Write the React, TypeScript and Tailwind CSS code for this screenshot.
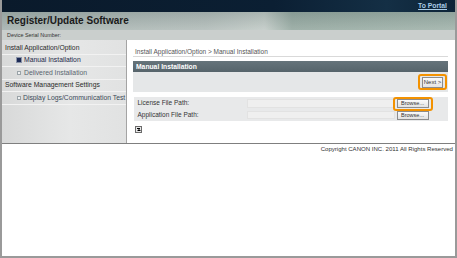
import React from "react";

const font = { fontFamily: '"Liberation Sans", Arial, sans-serif' };

function Bullet({ active }: { active?: boolean }) {
  return active ? (
    <span className="inline-block shrink-0 w-[4px] h-[4px] bg-[#1c2a55] outline outline-1 outline-[#8a93a8]" />
  ) : (
    <span className="inline-block shrink-0 w-[4px] h-[4px] border border-[#9aa3a8] bg-[#eef0f1]" />
  );
}

export default function App() {
  return (
    <div
      style={font}
      className="w-[457px] h-[258px] bg-white border-l-2 border-r-2 border-b-2 border-[#9a9a9a] flex flex-col overflow-hidden"
    >
      {/* top dark bar */}
      <div className="h-[12px] shrink-0 bg-[linear-gradient(90deg,#0a1a2b_0%,#0b1f33_60%,#142f45_85%,#0d2438_100%)] flex items-center justify-end pr-[8px]">
        <span className="text-[6.8px] font-bold text-[#a9cbe6] underline leading-[8px]">To Portal</span>
      </div>
      {/* title band */}
      <div className="h-[18px] shrink-0 relative overflow-hidden bg-[linear-gradient(90deg,#a8b4b1_0%,#b4bebb_45%,#c3ccc8_58%,#98aba3_64%,#a3b5ad_100%)] flex items-center pl-[5px]">
        <div className="absolute inset-0 bg-[linear-gradient(180deg,rgba(60,80,80,0.18)_0%,rgba(255,255,255,0.08)_100%)]" />
        <span className="relative text-[10px] font-bold text-[#1a1a1a] leading-[12px]">Register/Update Software</span>
      </div>
      {/* serial row */}
      <div className="h-[10px] shrink-0 bg-[#cacfcd] flex items-center pl-[5px]">
        <span className="text-[5.4px] text-[#333] leading-[6px]">Device Serial Number:</span>
      </div>
      {/* main */}
      <div className="h-[104px] shrink-0 flex border-b border-[#7f7f7f]">
        {/* sidebar */}
        <div className="w-[125px] shrink-0 border-r border-[#a4a4a4] bg-[linear-gradient(90deg,#d8d9d9_0%,#e6e7e7_55%,#e1e2e2_100%)] pt-[2px] text-[6.8px] leading-[8px] whitespace-nowrap">
          <div className="h-[12.5px] flex items-center pl-[3px] text-[#2a2a2a] border-b border-[#f2f2f2]">
            Install Application/Option
          </div>
          <div className="h-[12.5px] flex items-center pl-[15px] gap-[3px] text-[#1e2a4a] border-b border-[#f2f2f2]">
            <Bullet active />
            <span>Manual Installation</span>
          </div>
          <div className="h-[12.5px] flex items-center pl-[15px] gap-[3px] text-[#5a6670] border-b border-[#f2f2f2]">
            <Bullet />
            <span>Delivered Installation</span>
          </div>
          <div className="h-[12.5px] flex items-center pl-[3px] text-[#2a2a2a] border-b border-[#f2f2f2]">
            Software Management Settings
          </div>
          <div className="h-[12.5px] flex items-center pl-[15px] gap-[2px] text-[#3c4a58] border-b border-[#f2f2f2]">
            <Bullet />
            <span>Display Logs/Communication Test</span>
          </div>
        </div>
        {/* content */}
        <div className="flex-1 pl-[6px] pr-[7px] flex flex-col">
          <div className="mt-[8px] h-[8px] leading-[8px] text-[6.5px] text-[#555] pl-[2px] border-b border-[#d9d9d9] box-content">
            Install Application/Option &gt; Manual Installation
          </div>
          <div className="mt-[4px] h-[11px] bg-[linear-gradient(180deg,#66747b_0%,#56646b_100%)] flex items-center pl-[3px]">
            <span className="text-[6.75px] font-bold text-white leading-[8px]">Manual Installation</span>
          </div>
          <div className="h-[20px] bg-[#e5e7e8] flex items-center justify-end pr-[5px]">
            <span className="relative">
              <span className="absolute -left-[4px] -right-[4px] -top-[3px] -bottom-[2px] border-2 border-[#f39200] rounded-[3px]" />
              <span className="block w-[21px] h-[11px] border border-[#8c8c8c] bg-[linear-gradient(180deg,#fafafa,#e4e4e4)] text-[6px] leading-[9px] text-[#333] text-center">
                Next &gt;
              </span>
            </span>
          </div>
          <div className="mt-[5px] ml-[1px] h-[24px] bg-[#e8e9ea] flex flex-col text-[6.5px] leading-[8px] text-[#333]">
            <div className="h-[12px] flex items-center pl-[3.5px]">
              <span className="w-[109px] shrink-0">License File Path:</span>
              <span className="w-[148px] h-[9px] bg-[#efefef] border border-[#e2e2e2]" />
              <span className="relative ml-[2px]">
                <span className="absolute -left-[4px] -right-[4px] -top-[2px] -bottom-[3px] border-2 border-[#f39200] rounded-[3px]" />
                <span className="block w-[32px] h-[9px] border border-[#8c8c8c] bg-[linear-gradient(180deg,#fafafa,#e2e2e2)] text-[5.5px] leading-[7px] text-center">
                  Browse...
                </span>
              </span>
            </div>
            <div className="h-[12px] flex items-center pl-[3.5px]">
              <span className="w-[109px] shrink-0">Application File Path:</span>
              <span className="w-[148px] h-[8px] bg-[#efefef] border border-[#e2e2e2]" />
              <span className="ml-[2px] block w-[32px] h-[9px] border border-[#8c8c8c] bg-[linear-gradient(180deg,#fafafa,#e2e2e2)] text-[5.5px] leading-[7px] text-center">
                Browse...
              </span>
            </div>
          </div>
          <div className="mt-[5px] ml-[2px] w-[7px] h-[7px] border border-[#6b6b6b] bg-[#e8e8e8] flex flex-col items-center justify-center gap-[0.5px]">
            <span className="w-[3px] h-[0.8px] bg-black" />
            <span className="w-0 h-0 border-l-[2px] border-r-[2px] border-b-[2px] border-l-transparent border-r-transparent border-b-black" />
          </div>
        </div>
      </div>
      {/* footer */}
      <div className="flex-1 flex justify-end pr-[2px] pt-[1px]">
        <span className="text-[6.05px] leading-[8px] text-[#333]">Copyright CANON INC. 2011 All Rights Reserved</span>
      </div>
    </div>
  );
}
